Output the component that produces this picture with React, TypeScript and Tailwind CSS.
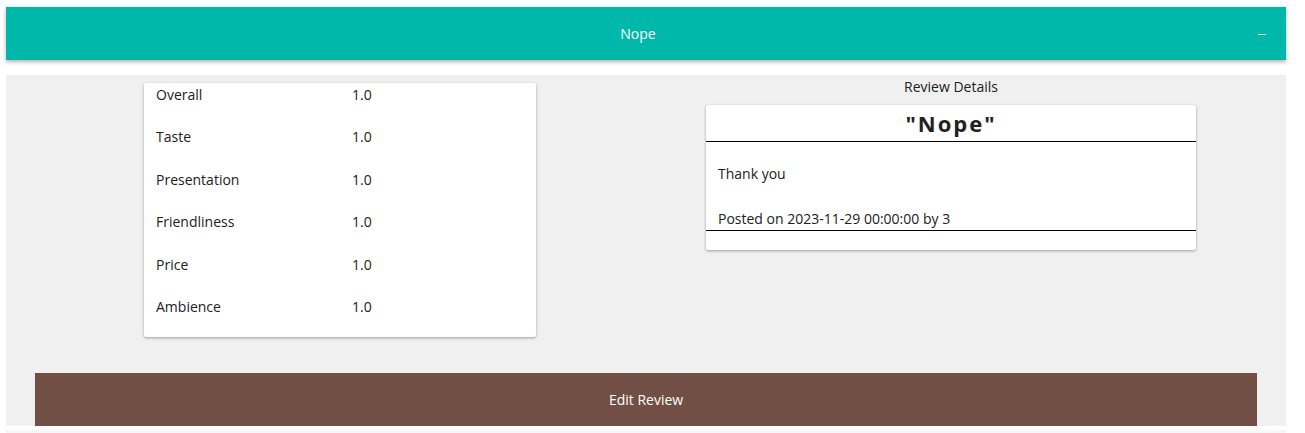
import React from 'react';

const ratings = [
  { label: 'Overall', value: '1.0' },
  { label: 'Taste', value: '1.0' },
  { label: 'Presentation', value: '1.0' },
  { label: 'Friendliness', value: '1.0' },
  { label: 'Price', value: '1.0' },
  { label: 'Ambience', value: '1.0' },
];

const App: React.FC = () => {
  return (
    <div
      className="min-h-screen bg-white pt-[7px] px-[6px] text-[14px] text-[#212121]"
      style={{ fontFamily: '"Open Sans", "Noto Sans", sans-serif' }}
    >
      {/* Header bar */}
      <div className="h-[53px] w-[1280px] bg-[#00b8a9] shadow-[0_2px_4px_rgba(0,0,0,0.3)] flex items-center text-white">
        <div className="flex-1 text-center pl-[20px]">Nope</div>
        <button className="w-[8px] mr-[20px] ml-[8px] h-[1.5px] mt-[2px] bg-white"></button>
      </div>

      {/* Body panel */}
      <div className="mt-[15px] w-[1280px] h-[351px] bg-[#f0f0f0] flex flex-col">
        <div className="flex flex-1">
          {/* Ratings card */}
          <div className="ml-[138px] mt-[8px] w-[392px] h-[254px] bg-white rounded-[2px] shadow-[0_1px_3px_rgba(0,0,0,0.35)] pl-[12px]">
            {ratings.map(r => (
              <div key={r.label} className="flex h-[42.4px] pt-[1px]">
                <div className="w-[196px]">{r.label}</div>
                <div>{r.value}</div>
              </div>
            ))}
          </div>

          {/* Review details */}
          <div className="ml-[170px] w-[490px] flex flex-col">
            <div className="text-center h-[30px] pt-[1px]">Review Details</div>
            <div className="bg-white rounded-[2px] shadow-[0_1px_3px_rgba(0,0,0,0.35)] h-[145px]">
              <div className="h-[37px] border-b border-black flex items-center justify-center text-[22px] font-bold tracking-[2px]">
                "Nope"
              </div>
              <div className="px-[12px] pt-[21px]">Thank you</div>
              <div className="px-[12px] pt-[24px] h-[47px] border-b border-black">Posted on 2023-11-29 00:00:00 by 3</div>
            </div>
          </div>
        </div>

        {/* Edit button */}
        <button className="mx-[29px] h-[53px] bg-[#724f44] text-white text-[14px]">
          Edit Review
        </button>
      </div>
      <div className="mt-[4px] w-[1280px] h-[10px] bg-[#f7f7f7]"></div>
    </div>
  );
};

export default App;
